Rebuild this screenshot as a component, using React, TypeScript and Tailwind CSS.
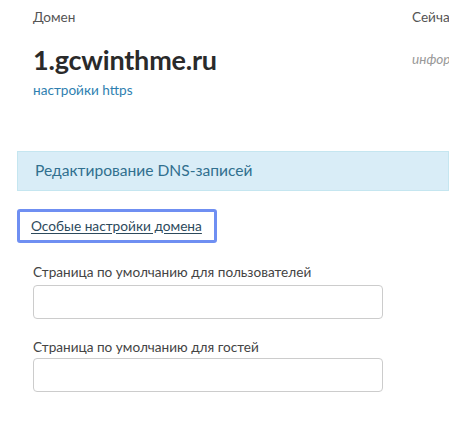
import React from "react";

export default function App() {
  return (
    <div className="w-[449px] h-[424px] overflow-hidden bg-white text-[#333] font-['Lato','Open_Sans',sans-serif]">
      <div className="flex w-[600px]">
        <div className="w-[379px] pl-[33px] pt-[8px] shrink-0">
          <div className="text-[13.6px] leading-[18px] text-[#555]">Домен</div>
          <div className="mt-[18px] text-[27px] leading-[32px] font-bold text-[#2a2a2a] tracking-[-0.2px]">1.gcwinthme.ru</div>
          <a href="#" className="block mt-[5px] text-[13.6px] leading-[18px] text-[#2f7fb0]">настройки https</a>
        </div>
        <div className="pt-[8px] pl-[33px]">
          <div className="text-[13.6px] leading-[18px] text-[#555]">Сейчас</div>
          <div className="mt-[24px] text-[13.6px] leading-[18px] italic text-[#999]">информация</div>
        </div>
      </div>

      <div className="ml-[17px] mt-[52px] h-[40px] border border-[#c5e6f0] bg-[#d9edf7] flex items-center pl-[17px] text-[15.6px] text-[#31708f]">
        Редактирование DNS-записей
      </div>

      <div className="ml-[17px] mt-[18px] w-[200px] h-[34px] rounded-[3px] border-[3px] border-[#6f8ff2] flex items-center pl-[11px]">
        <a href="#" className="text-[13.7px] text-[#2d4a5c] underline underline-offset-2">Особые настройки домена</a>
      </div>

      <div className="ml-[33px] mt-[20px] w-[350px]">
        <div className="text-[13.6px] leading-[18px] text-[#444]">Страница по умолчанию для пользователей</div>
        <div className="mt-[4px] h-[34px] rounded-[4px] border border-[#ccc] bg-white" />
        <div className="mt-[19px] text-[13.6px] leading-[18px] text-[#444]">Страница по умолчанию для гостей</div>
        <div className="mt-[2px] h-[34px] rounded-[4px] border border-[#ccc] bg-white" />
      </div>
    </div>
  );
}
